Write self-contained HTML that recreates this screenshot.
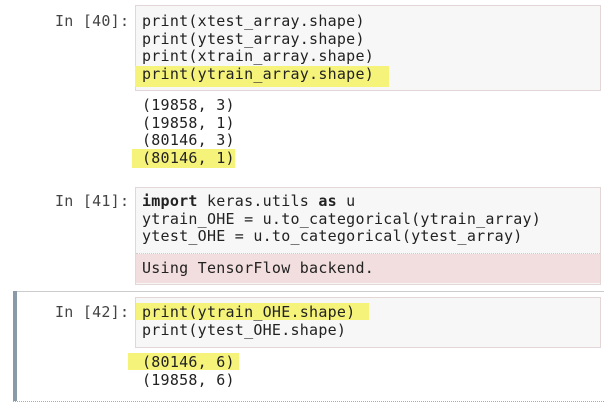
<!DOCTYPE html>
<html><head><style>
body{margin:0;width:604px;height:405px;background:#fff;position:relative;overflow:hidden;font-family:"DejaVu Sans Mono","Liberation Mono",monospace;font-size:15px;letter-spacing:0.25px;color:#222}
.abs{position:absolute}
.box{position:absolute;background:#f7f7f7;border:1px solid #e3d6d6}
.line{position:absolute;white-space:pre;line-height:17.5px}
.prompt{position:absolute;color:#444;white-space:pre;left:55px;line-height:17.5px}
.hl{position:absolute;background:#f5f37a}
</style></head><body>
<div class="box" style="left:135px;top:5px;width:464px;height:84px"></div>
<div class="hl" style="left:135px;top:66px;width:254px;height:21px"></div>
<div class="hl" style="left:132px;top:149px;width:103px;height:19px"></div>
<div class="prompt" style="top:13px">In [40]:</div>
<div class="line" style="left:142px;top:13px">print(xtest_array.shape)
print(ytest_array.shape)
print(xtrain_array.shape)
print(ytrain_array.shape)</div>
<div class="line" style="left:142px;top:97px">(19858, 3)
(19858, 1)
(80146, 3)
(80146, 1)</div>

<div class="box" style="left:135px;top:187px;width:464px;height:96px"></div>
<div class="abs" style="left:136px;top:254px;width:464px;height:29px;background:#f2dede"></div>
<div class="abs" style="left:136px;top:253px;width:464px;border-top:1px dotted #ccc"></div>
<div class="prompt" style="top:193px">In [41]:</div>
<div class="line" style="left:142px;top:193px"><b>import</b> keras.utils <b>as</b> u
ytrain_OHE = u.to_categorical(ytrain_array)
ytest_OHE = u.to_categorical(ytest_array)</div>
<div class="line" style="left:142px;top:260px">Using TensorFlow backend.</div>

<div class="abs" style="left:13px;top:291px;width:591px;height:109px;border-top:1px solid #ccc;border-bottom:1px dotted #aaa"></div>
<div class="abs" style="left:13px;top:291px;width:4px;height:110px;background:#8a9aa8"></div>
<div class="box" style="left:135px;top:297px;width:464px;height:49px"></div>
<div class="hl" style="left:136px;top:303px;width:233px;height:17px"></div>
<div class="hl" style="left:128px;top:353px;width:111px;height:17px"></div>
<div class="prompt" style="top:304px">In [42]:</div>
<div class="line" style="left:142px;top:304px">print(ytrain_OHE.shape)
print(ytest_OHE.shape)</div>
<div class="line" style="left:142px;top:354px">(80146, 6)
(19858, 6)</div>
</body></html>
